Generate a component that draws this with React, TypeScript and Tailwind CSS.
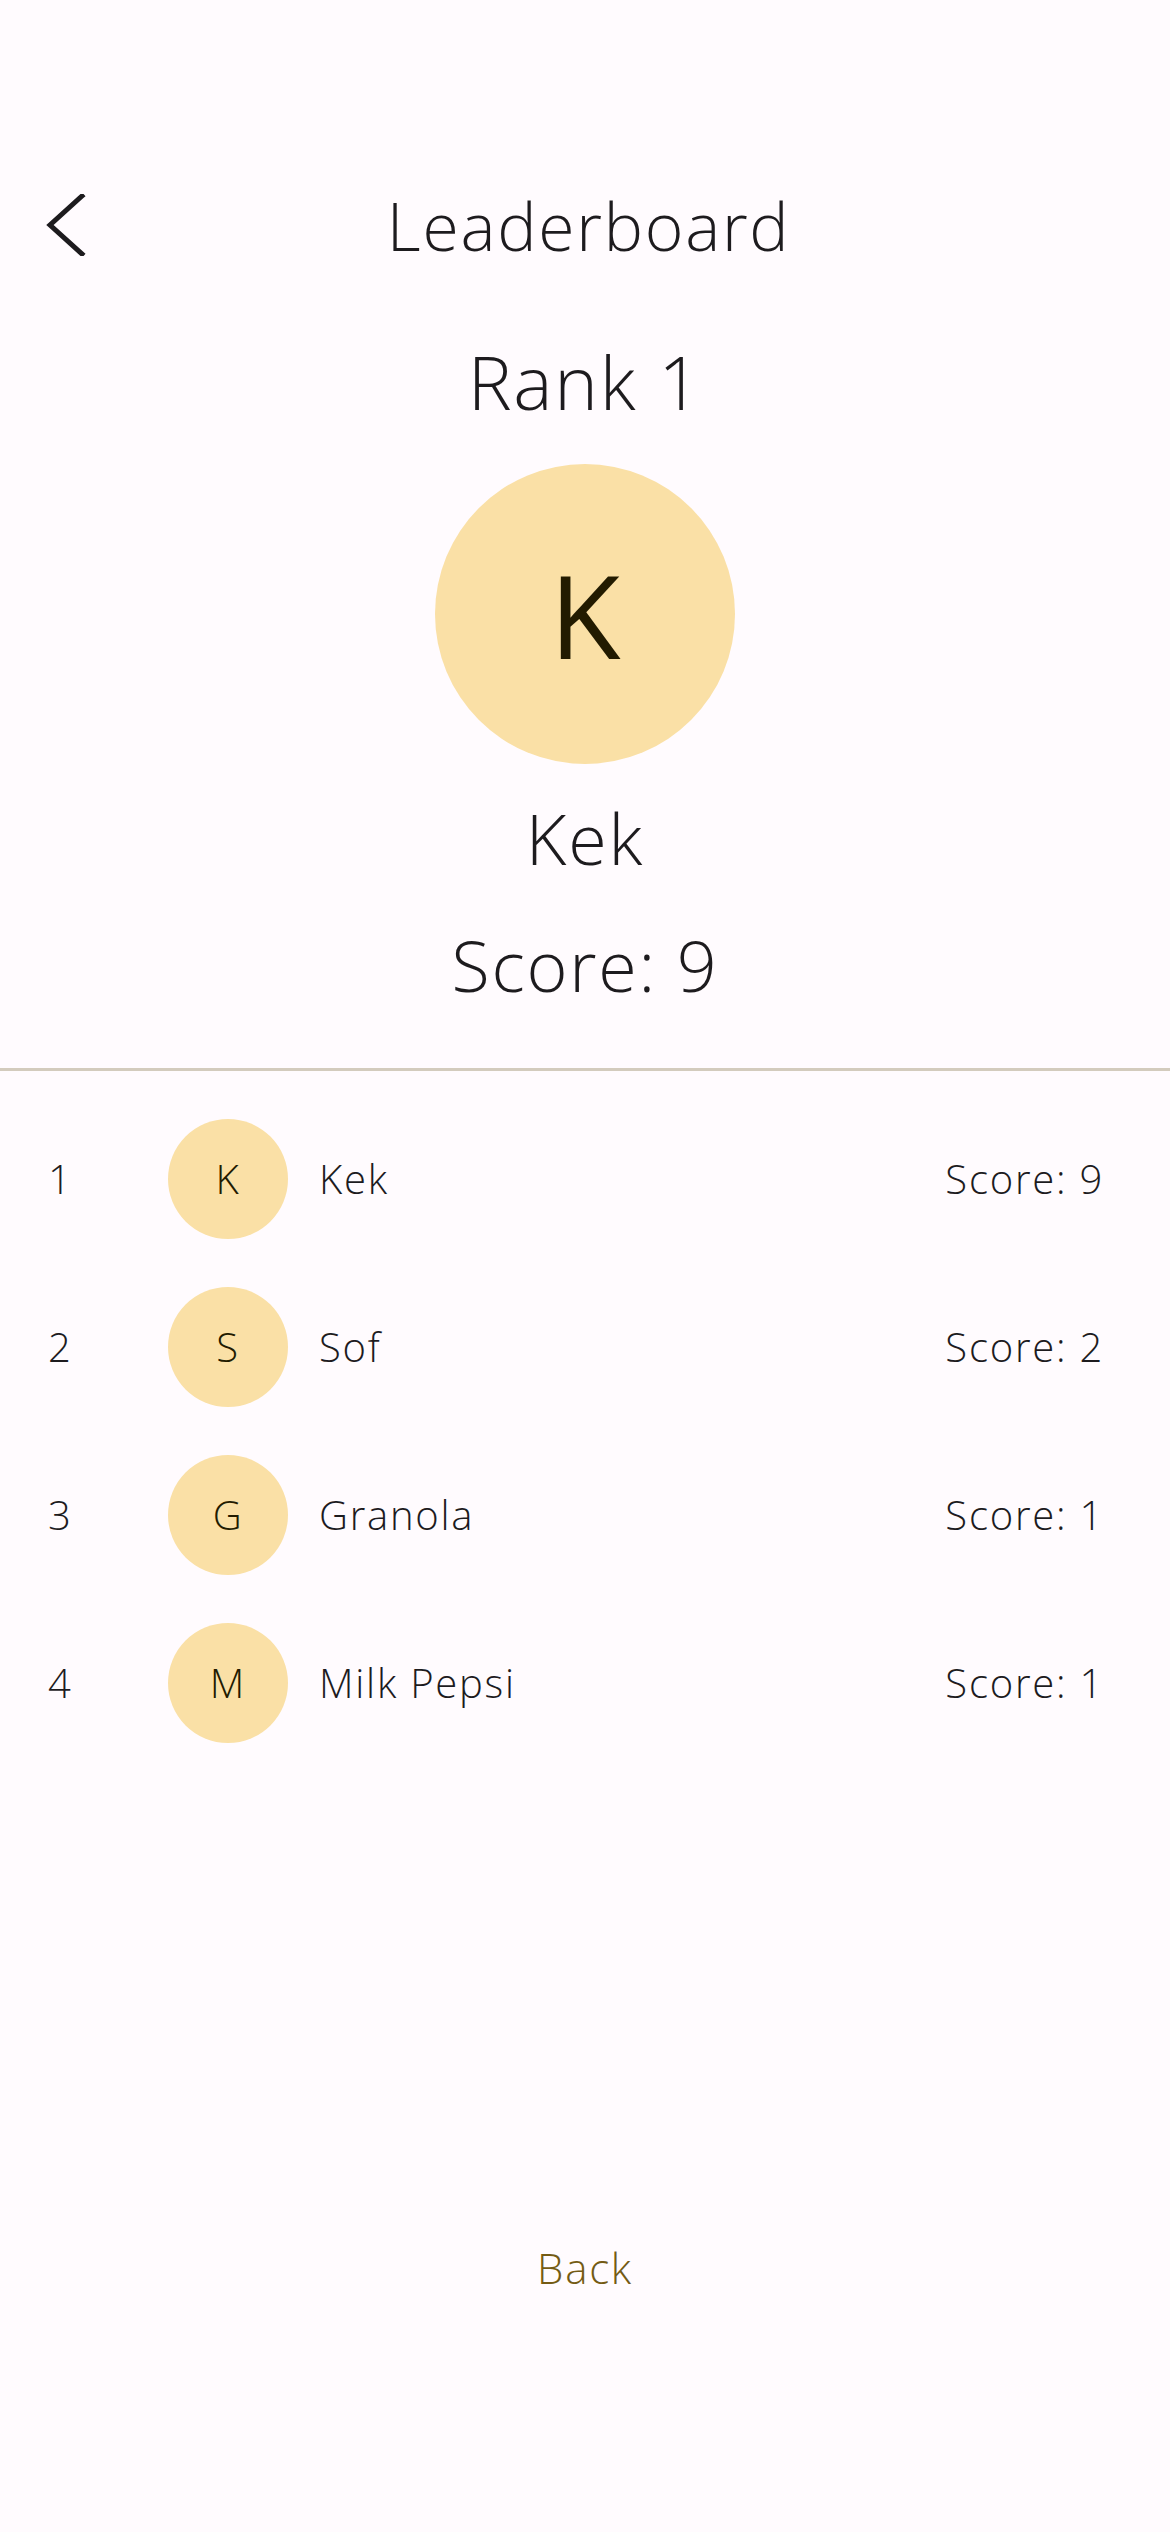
import React from "react";

const players = [
  { rank: 1, name: "Kek", score: 9 },
  { rank: 2, name: "Sof", score: 2 },
  { rank: 3, name: "Granola", score: 1 },
  { rank: 4, name: "Milk Pepsi", score: 1 },
];

const font = { fontFamily: '"Open Sans", "Noto Sans", sans-serif' };

const Row = ({ p }: { p: (typeof players)[number] }) => {
  return (
    <div className="flex items-center h-[168px] pl-[48px] pr-[66px]">
      <div className="w-[120px] text-[40px] leading-none">{p.rank}</div>
      <div className="w-[120px] h-[120px] rounded-full bg-[#fae0a6] flex items-center justify-center text-[40px] leading-none text-[#221b00]">
        {p.name[0]}
      </div>
      <div className="ml-[31px] flex-1 text-[40px] leading-none">{p.name}</div>
      <div className="text-[40px] leading-none">Score: {p.score}</div>
    </div>
  );
};

export default function App() {
  return (
    <div
      className="w-[1170px] h-[2532px] bg-[#fffbfe] text-[#1d1b1e] flex flex-col font-light tracking-[0.11em]"
      style={font}
    >
      <div className="mt-[169px] h-[112px] grid grid-cols-[1fr_auto_1fr] items-center">
        <div className="pl-[46px]">
          <svg width="40" height="62" viewBox="0 0 40 62" fill="none">
            <path d="M36 2 L4 31 L36 60" stroke="#1d1b1e" strokeWidth="5" strokeLinecap="square" />
          </svg>
        </div>
        <h1 className="text-[66px] leading-none pl-[0.11em]">Leaderboard</h1>
        <div />
      </div>

      <div className="mt-[64px] text-center text-[74px] leading-none">Rank 1</div>

      <div className="mt-[45px] mx-auto w-[300px] h-[300px] rounded-full bg-[#fae0a6] flex items-center justify-center text-[116px] leading-none font-normal tracking-normal text-[#221b00]">
        K
      </div>

      <div className="mt-[39px] text-center text-[70px] leading-none">Kek</div>
      <div className="mt-[57px] text-center text-[70px] leading-none">Score: 9</div>

      <div className="mt-[68px] h-[3px] bg-[#d3cbbd]" />

      <div className="pt-[24px] flex flex-col">
        {players.map((p) => (
          <Row key={p.rank} p={p} />
        ))}
      </div>

      <div className="mt-[480px] text-center text-[42px] leading-none text-[#745b14]">Back</div>
    </div>
  );
}
